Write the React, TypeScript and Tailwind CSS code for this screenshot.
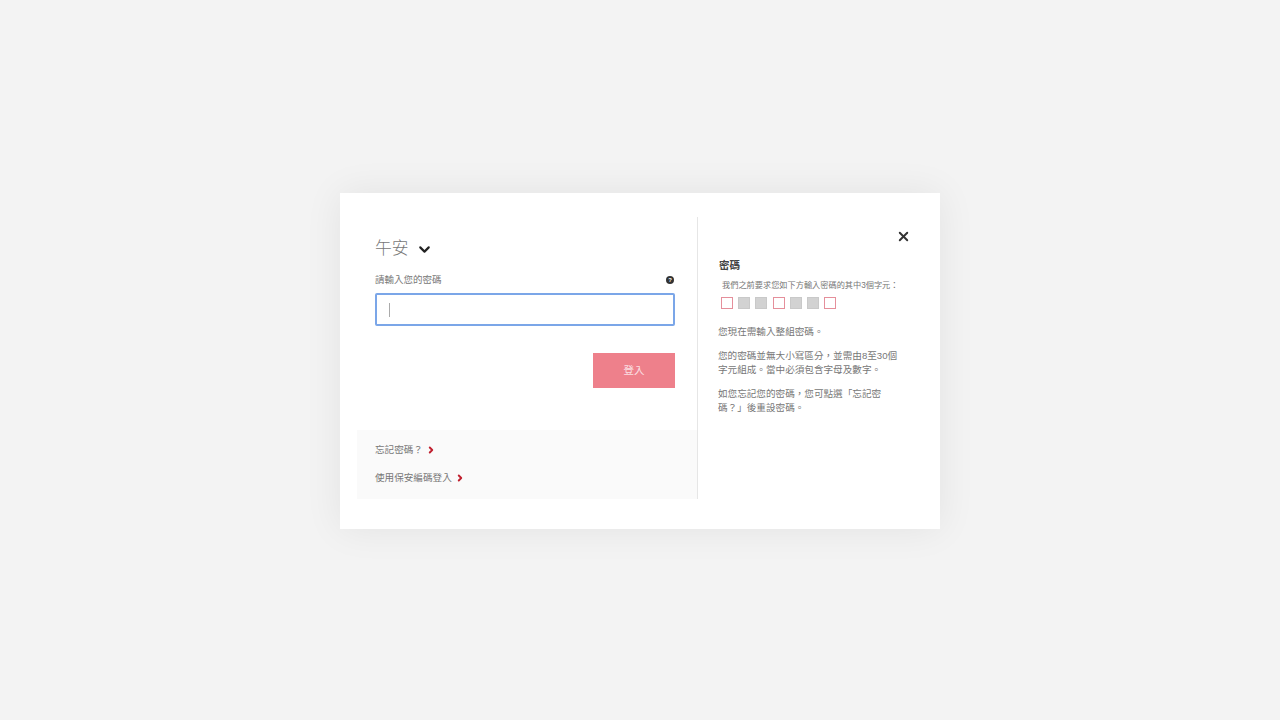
import { ChevronDown, ChevronRight, X } from "lucide-react";

const hintBoxes = [true, false, false, true, false, false, true];

const FooterLink = ({ label }: { label: string }) => (
  <a className="flex items-center gap-[3px] h-[14px] text-[9.6px] leading-[14px] text-[#777]">
    <span>{label}</span>
    <ChevronRight className="size-[10px] text-[#c0202f]" strokeWidth={4.5} />
  </a>
);

const App = () => {
  return (
    <div
      lang="zh-TW"
      className="h-screen w-full flex justify-center items-center pt-[2px] bg-[#f3f3f3] font-['Liberation_Sans','Noto_Sans_CJK_TC',sans-serif]"
    >
      <div className="w-[600px] h-[336px] bg-white flex pt-6 pb-[30px] pl-[17px] shadow-[0_0_36px_rgba(0,0,0,0.07)]">
        {/* left side */}
        <div className="w-[341px] border-r border-[#e6e6e6] flex flex-col justify-between">
          <div className="pl-[18px] pr-[22px]">
            <div className="flex items-center gap-[7px] mt-[23px] h-[17px]">
              <span className="text-[16.8px] leading-[17px] font-light text-[#777]">午安</span>
              <ChevronDown className="size-[17px] mt-[2px] text-[#222]" strokeWidth={3} />
            </div>
            <div className="flex items-center justify-between mt-[16px] h-[14px]">
              <span className="text-[9.5px] leading-[14px] text-[#777]">請輸入您的密碼</span>
              <span className="size-[8px] mr-[1px] rounded-full bg-[#333] text-white text-[6px] leading-[8px] text-center font-bold">
                ?
              </span>
            </div>
            <div className="mt-[6px] h-[33px] border-2 border-[#7ba6e8] rounded-[2px] flex items-center pl-[12px]">
              <div className="w-px h-[14px] bg-[#aaa]" />
            </div>
            <div className="flex justify-end mt-[27px]">
              <button className="w-[82px] h-[35px] bg-[#ee808b] text-[#fbdfe2] text-[10.5px]">登入</button>
            </div>
          </div>
          <div className="h-[69px] bg-[#fafafa] pl-[18px] pt-[13px] flex flex-col gap-[14px]">
            <FooterLink label="忘記密碼？" />
            <FooterLink label="使用保安編碼登入" />
          </div>
        </div>

        {/* right side */}
        <div className="flex-1 pl-[20px] pr-[30px] text-[#777]">
          <div className="flex justify-end h-[40px] pt-[12px] -mr-[1px]">
            <X className="size-[15px] text-[#333]" strokeWidth={3} />
          </div>
          <div className="pl-px text-[10.5px] leading-[16px] font-bold text-[#444]">密碼</div>
          <div className="mt-[7px] pl-[4px] text-[8.2px] leading-[12px] whitespace-nowrap">
            我們之前要求您如下方輸入密碼的其中3個字元：
          </div>
          <div className="flex gap-[5.2px] mt-[5px] pl-[3px]">
            {hintBoxes.map((picked, index) => (
              <div
                key={index}
                className={
                  picked
                    ? "size-[12px] border-[1.5px] border-[#e58f9b] bg-white"
                    : "size-[12px] border border-[#c9c9c9] bg-[#d2d2d2]"
                }
              />
            ))}
          </div>
          <div className="mt-[16px] flex flex-col gap-[10px] text-[9.6px] leading-[14px] whitespace-nowrap">
            <p>您現在需輸入整組密碼。</p>
            <p>
              您的密碼並無大小寫區分，並需由8至30個
              <br />
              字元組成。當中必須包含字母及數字。
            </p>
            <p>
              如您忘記您的密碼，您可點選「忘記密
              <br />
              碼？」後重設密碼。
            </p>
          </div>
        </div>
      </div>
    </div>
  );
};

export default App;
